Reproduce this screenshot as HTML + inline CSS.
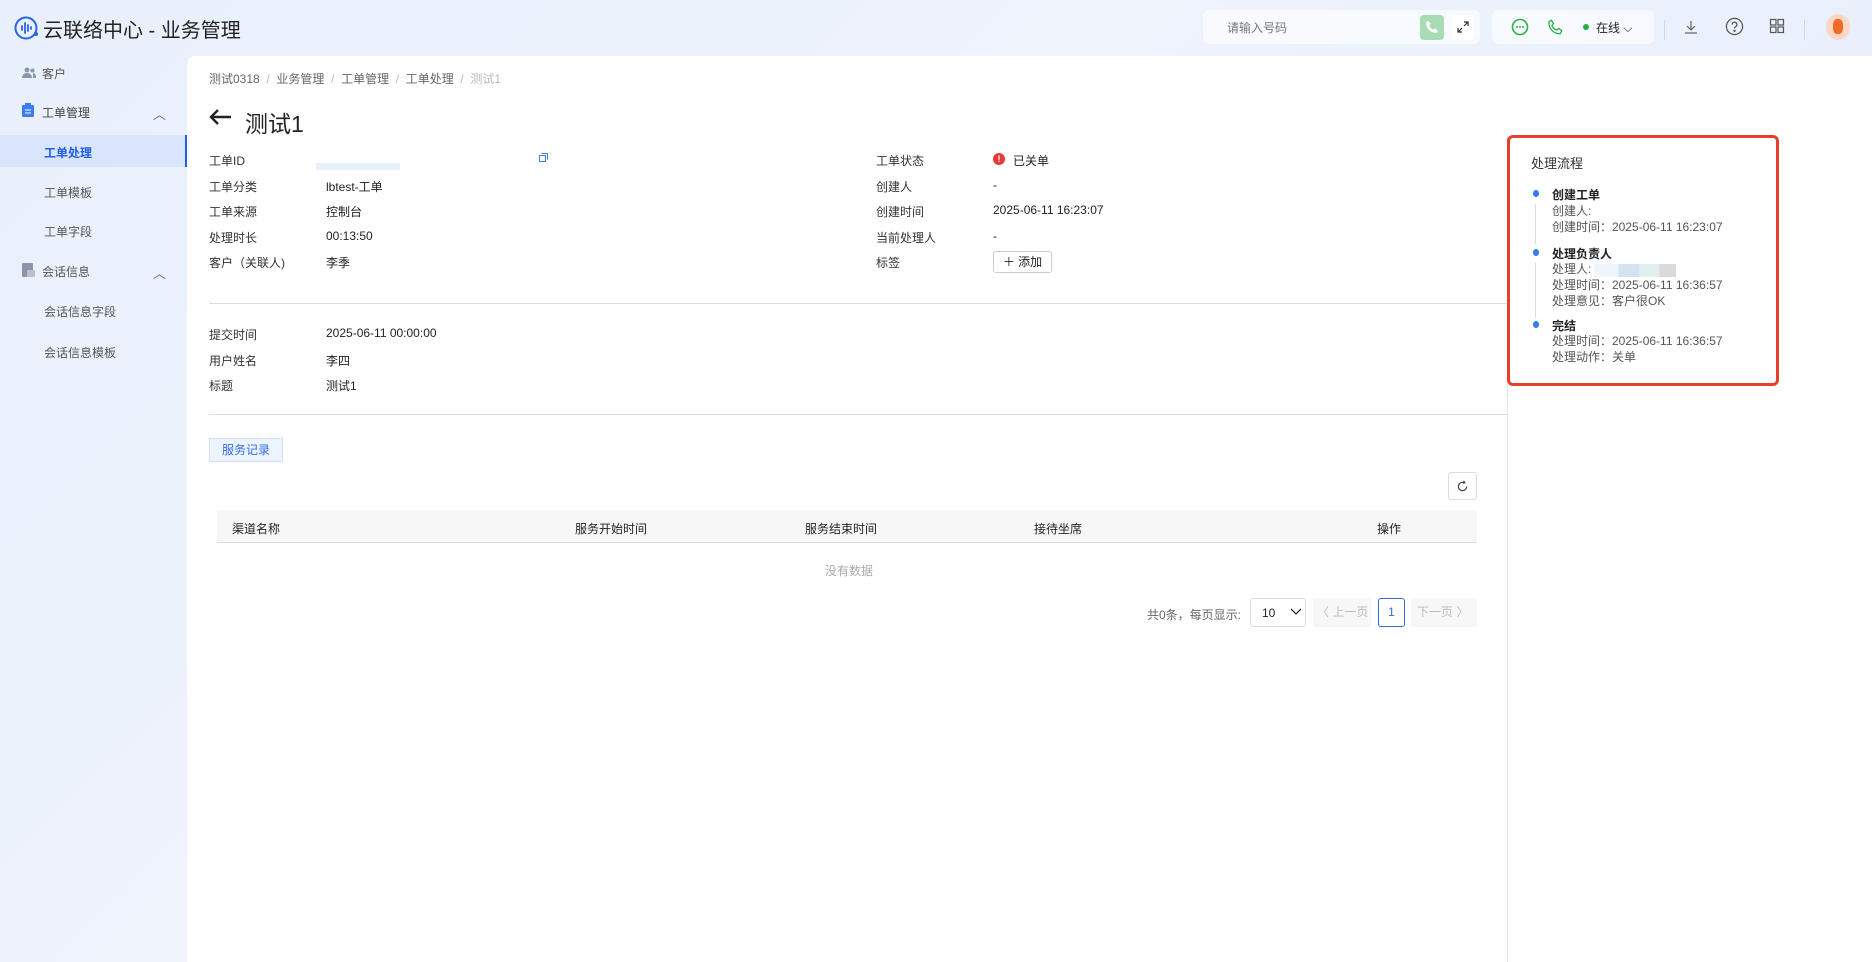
<!DOCTYPE html>
<html><head><meta charset="utf-8"><style>
*{margin:0;padding:0;box-sizing:border-box}
body{width:1872px;height:962px;overflow:hidden;font-family:"Liberation Sans","Noto Sans CJK SC",sans-serif;font-size:12px;color:#222;background:linear-gradient(135deg,#e8f0fc 0%,#eef3fc 40%,#e3edfb 100%);position:relative}
.a{position:absolute;white-space:nowrap}
.panel{position:absolute;left:187px;top:56px;width:1685px;height:906px;background:#fff;border-top-left-radius:8px}
.side{color:#555;font-size:12px}
.lbl{color:#333}
.gray{color:#999}
.tl{font-size:12px;color:#555;line-height:16px}
</style></head><body>
<!-- header -->
<svg class="a" style="left:13px;top:15px" width="26" height="26" viewBox="0 0 26 26"><circle cx="13" cy="13" r="10.5" fill="none" stroke="#2a62e8" stroke-width="2"/><g stroke="#2a62e8" stroke-width="1.8" stroke-linecap="round"><line x1="9" y1="11" x2="9" y2="15"/><line x1="12" y1="8" x2="12" y2="18"/><line x1="15" y1="10" x2="15" y2="16"/><line x1="18" y1="12" x2="18" y2="14"/></g><circle cx="23" cy="19" r="2" fill="#2a62e8"/></svg>
<div class="a" style="left:43px;top:14px;font-size:20px;color:#222">云联络中心 - 业务管理</div>
<div class="a" style="left:1203px;top:10px;width:277px;height:34px;background:rgba(255,255,255,.6);border-radius:6px"></div>
<div class="a" style="left:1227px;top:19px;font-size:12px;color:#777">请输入号码</div>
<div class="a" style="left:1420px;top:15px;width:24px;height:25px;background:#a8dcb5;border-radius:4px"></div>
<svg class="a" style="left:1424px;top:19px" width="16" height="16" viewBox="0 0 24 24"><path d="M6 3l4 4-2 3c1 3 3 5 6 6l3-2 4 4-2 3C10 21 3 14 3 5z" fill="#fff"/></svg>
<div class="a" style="left:1452px;top:15px;width:22px;height:25px;background:#fff;border-radius:4px"></div>
<svg class="a" style="left:1456px;top:20px" width="14" height="14" viewBox="0 0 14 14" fill="none" stroke="#333" stroke-width="1.2"><path d="M8 2h4v4M12 2L8 6M6 12H2V8M2 12l4-4"/></svg>
<div class="a" style="left:1492px;top:10px;width:162px;height:34px;background:rgba(255,255,255,.6);border-radius:6px"></div>
<svg class="a" style="left:1511px;top:18px" width="18" height="18" viewBox="0 0 18 18"><circle cx="9" cy="9" r="7.5" fill="none" stroke="#2bb24c" stroke-width="1.6"/><g fill="#2bb24c"><circle cx="6" cy="9" r="1"/><circle cx="9" cy="9" r="1"/><circle cx="12" cy="9" r="1"/></g></svg>
<svg class="a" style="left:1546px;top:18px" width="18" height="18" viewBox="0 0 24 24"><path d="M7 3l3 4-2 3c1 3 3 5 6 6l3-2 4 3-2 4C10 21 3 14 4 5z" fill="none" stroke="#2bb24c" stroke-width="1.8"/></svg>
<div class="a" style="left:1583px;top:24px;width:6px;height:6px;border-radius:50%;background:#19b445"></div>
<div class="a" style="left:1596px;top:19px;font-size:12px;color:#222">在线 ⌵</div>
<div class="a" style="left:1664px;top:20px;width:1px;height:20px;background:#d0d8e6"></div>
<svg class="a" style="left:1683px;top:19px" width="16" height="16" viewBox="0 0 16 16" fill="none" stroke="#666" stroke-width="1.2"><path d="M8 2v9M4 7l4 4 4-4M2 14h12"/></svg>
<svg class="a" style="left:1725px;top:17px" width="19" height="19" viewBox="0 0 20 20" fill="none" stroke="#555" stroke-width="1.3"><circle cx="10" cy="10" r="8.5"/><path d="M7.5 8a2.5 2.5 0 1 1 3.5 2.3c-.8.4-1 1-1 1.7"/><circle cx="10" cy="14.5" r=".6" fill="#555"/></svg>
<svg class="a" style="left:1769px;top:18px" width="16" height="16" viewBox="0 0 16 16" fill="none" stroke="#555" stroke-width="1.2"><rect x="1.5" y="1.5" width="5.5" height="5.5"/><rect x="9" y="1.5" width="5.5" height="5.5"/><rect x="1.5" y="9" width="5.5" height="5.5"/><rect x="9" y="9" width="5.5" height="5.5"/></svg>
<div class="a" style="left:1804px;top:20px;width:1px;height:20px;background:#d0d8e6"></div>
<div class="a" style="left:1826px;top:14px;width:24px;height:26px;border-radius:50%;background:#fbd6c4"></div>
<div class="a" style="left:1833px;top:19px;width:10px;height:15px;border-radius:40%;background:#f06a2a"></div>
<!-- sidebar -->
<svg class="a" style="left:22px;top:67px" width="14" height="12" viewBox="0 0 14 12" fill="#8a95a8"><circle cx="5" cy="3" r="2.5"/><path d="M0 11c0-3 2-5 5-5s5 2 5 5z"/><circle cx="10.5" cy="3.5" r="2"/><path d="M11 6c2 0 3 2 3 5h-3z"/></svg>
<div class="a side" style="left:42px;top:65px">客户</div>
<svg class="a" style="left:22px;top:103px" width="12" height="14" viewBox="0 0 12 14"><rect x="0" y="2" width="12" height="12" rx="1" fill="#3b7cf0"/><rect x="3" y="0" width="6" height="3" fill="#3b7cf0"/><path d="M3 7h6M3 10h6" stroke="#fff"/></svg>
<div class="a side" style="left:42px;top:104px;color:#444">工单管理</div>
<div class="a" style="left:153px;top:104px;color:#666;font-size:13px">︿</div>
<div class="a" style="left:0;top:135px;width:187px;height:32px;background:#d8e5fb"></div>
<div class="a" style="left:185px;top:135px;width:2px;height:32px;background:#1f5ee8"></div>
<div class="a" style="left:44px;top:144px;color:#1f5ee8;font-weight:bold">工单处理</div>
<div class="a side" style="left:44px;top:184px">工单模板</div>
<div class="a side" style="left:44px;top:223px">工单字段</div>
<svg class="a" style="left:22px;top:263px" width="13" height="14" viewBox="0 0 13 14"><rect width="11" height="14" rx="1" fill="#8a95a8"/><rect x="5" y="7" width="8" height="7" fill="#b8c1d0"/></svg>
<div class="a side" style="left:42px;top:263px">会话信息</div>
<div class="a" style="left:153px;top:263px;color:#666;font-size:13px">︿</div>
<div class="a side" style="left:44px;top:303px">会话信息字段</div>
<div class="a side" style="left:44px;top:344px">会话信息模板</div>
<!-- panel -->
<div class="panel"></div>
<div class="a" style="left:209px;top:70px;color:#666">测试0318 <span style="color:#bbb">&nbsp;/&nbsp;</span> 业务管理 <span style="color:#bbb">&nbsp;/&nbsp;</span> 工单管理 <span style="color:#bbb">&nbsp;/&nbsp;</span> 工单处理 <span style="color:#bbb">&nbsp;/&nbsp; 测试1</span></div>
<svg class="a" style="left:208px;top:108px" width="24" height="18" viewBox="0 0 24 18" fill="none" stroke="#222" stroke-width="2.4"><path d="M23 9H3M10 2L3 9l7 7"/></svg>
<div class="a" style="left:245px;top:105px;font-size:23px;color:#222">测试1</div>
<div class="a lbl" style="left:209px;top:152px">工单ID</div>
<svg class="a" style="left:539px;top:153px" width="9" height="9" viewBox="0 0 9 9" fill="none" stroke="#3b7cf0"><rect x=".5" y="2.5" width="6" height="6"/><path d="M2.5 .5h6v6"/></svg>
<div class="a" style="left:316px;top:163px;width:84px;height:7px;background:#e8f1fb"></div>
<div class="a lbl" style="left:209px;top:178px">工单分类</div><div class="a" style="left:326px;top:178px">lbtest-工单</div>
<div class="a lbl" style="left:209px;top:203px">工单来源</div><div class="a" style="left:326px;top:203px">控制台</div>
<div class="a lbl" style="left:209px;top:229px">处理时长</div><div class="a" style="left:326px;top:229px">00:13:50</div>
<div class="a lbl" style="left:209px;top:254px">客户（关联人)</div><div class="a" style="left:326px;top:254px">李季</div>
<div class="a lbl" style="left:876px;top:152px">工单状态</div>
<div class="a" style="left:993px;top:153px;width:12px;height:12px;border-radius:50%;background:#e83a3a;color:#fff;font-size:9px;text-align:center;line-height:12px;font-weight:bold">!</div>
<div class="a" style="left:1013px;top:152px">已关单</div>
<div class="a lbl" style="left:876px;top:178px">创建人</div><div class="a" style="left:993px;top:178px">-</div>
<div class="a lbl" style="left:876px;top:203px">创建时间</div><div class="a" style="left:993px;top:203px">2025-06-11 16:23:07</div>
<div class="a lbl" style="left:876px;top:229px">当前处理人</div><div class="a" style="left:993px;top:229px">-</div>
<div class="a lbl" style="left:876px;top:254px">标签</div>
<div class="a" style="left:993px;top:251px;width:59px;height:22px;border:1px solid #ccc;border-radius:3px;font-size:12px;line-height:20px;text-align:center">＋ 添加</div>
<div class="a" style="left:209px;top:303px;width:1298px;height:1px;background:#ddd"></div>
<div class="a lbl" style="left:209px;top:326px">提交时间</div><div class="a" style="left:326px;top:326px">2025-06-11 00:00:00</div>
<div class="a lbl" style="left:209px;top:352px">用户姓名</div><div class="a" style="left:326px;top:352px">李四</div>
<div class="a lbl" style="left:209px;top:377px">标题</div><div class="a" style="left:326px;top:377px">测试1</div>
<div class="a" style="left:209px;top:414px;width:1298px;height:1px;background:#ddd"></div>
<div class="a" style="left:1507px;top:135px;width:1px;height:827px;background:#e5e5e5"></div>
<div class="a" style="left:209px;top:438px;width:74px;height:24px;border:1px solid #cfe0f8;background:#edf4ff;color:#2f6be8;font-size:12px;line-height:22px;text-align:center">服务记录</div>
<div class="a" style="left:1448px;top:472px;width:29px;height:28px;border:1px solid #ddd;border-radius:3px"></div>
<svg class="a" style="left:1456px;top:480px" width="13" height="13" viewBox="0 0 14 14" fill="none" stroke="#444" stroke-width="1.3"><path d="M11.5 7A4.5 4.5 0 1 1 7 2.5h2"/><path d="M8 1l1.5 1.5L8 4"/></svg>
<div class="a" style="left:217px;top:510px;width:1260px;height:33px;background:#f7f7f7;border-bottom:1px solid #ddd"></div>
<div class="a" style="left:232px;top:520px">渠道名称</div>
<div class="a" style="left:575px;top:520px">服务开始时间</div>
<div class="a" style="left:805px;top:520px">服务结束时间</div>
<div class="a" style="left:1034px;top:520px">接待坐席</div>
<div class="a" style="left:1377px;top:520px">操作</div>
<div class="a" style="left:825px;top:562px;color:#aaa">没有数据</div>
<div class="a" style="left:1147px;top:606px;color:#666">共0条，每页显示:</div>
<div class="a" style="left:1250px;top:598px;width:56px;height:29px;border:1px solid #ddd;border-radius:3px"></div>
<div class="a" style="left:1262px;top:606px">10</div>
<svg class="a" style="left:1290px;top:608px" width="12" height="8" viewBox="0 0 12 8" fill="none" stroke="#333" stroke-width="1.3"><path d="M1 1l5 5 5-5"/></svg>
<div class="a" style="left:1313px;top:598px;width:58px;height:29px;background:#f7f7f7;color:#bbb;line-height:29px;padding-left:4px">〈 上一页</div>
<div class="a" style="left:1378px;top:598px;width:27px;height:29px;border:1px solid #2f6be8;border-radius:3px;color:#2f6be8;text-align:center;line-height:27px">1</div>
<div class="a" style="left:1411px;top:598px;width:66px;height:29px;background:#f7f7f7;color:#bbb;line-height:29px;padding-left:6px">下一页 〉</div>
<!-- process box -->
<div class="a" style="left:1507px;top:135px;width:272px;height:251px;border:3px solid #e63f2a;border-radius:6px"></div>
<div class="a" style="left:1531px;top:153px;font-size:13px;color:#333">处理流程</div>
<div class="a" style="left:1533px;top:190px;width:6px;height:7px;border-radius:50%;background:#2f7bf0"></div>
<div class="a" style="left:1535px;top:204px;width:1px;height:40px;background:#ddd"></div>
<div class="a" style="left:1533px;top:249px;width:6px;height:7px;border-radius:50%;background:#2f7bf0"></div>
<div class="a" style="left:1535px;top:263px;width:1px;height:55px;background:#ddd"></div>
<div class="a" style="left:1533px;top:321px;width:6px;height:7px;border-radius:50%;background:#2f7bf0"></div>
<div class="a" style="left:1552px;top:186px;font-weight:bold;color:#222">创建工单</div>
<div class="a tl" style="left:1552px;top:203px">创建人:<br>创建时间：2025-06-11 16:23:07</div>
<div class="a" style="left:1552px;top:245px;font-weight:bold;color:#222">处理负责人</div>
<div class="a tl" style="left:1552px;top:261px">处理人:<br>处理时间：2025-06-11 16:36:57<br>处理意见：客户很OK</div>
<div class="a" style="left:1594px;top:264px;width:82px;height:13px;background:linear-gradient(90deg,#eef6fb 0 30%,#d3e3f1 30% 55%,#e0efed 55% 80%,#dadada 80%)"></div>
<div class="a" style="left:1552px;top:317px;font-weight:bold;color:#222">完结</div>
<div class="a tl" style="left:1552px;top:333px">处理时间：2025-06-11 16:36:57<br>处理动作：关单</div>
</body></html>
